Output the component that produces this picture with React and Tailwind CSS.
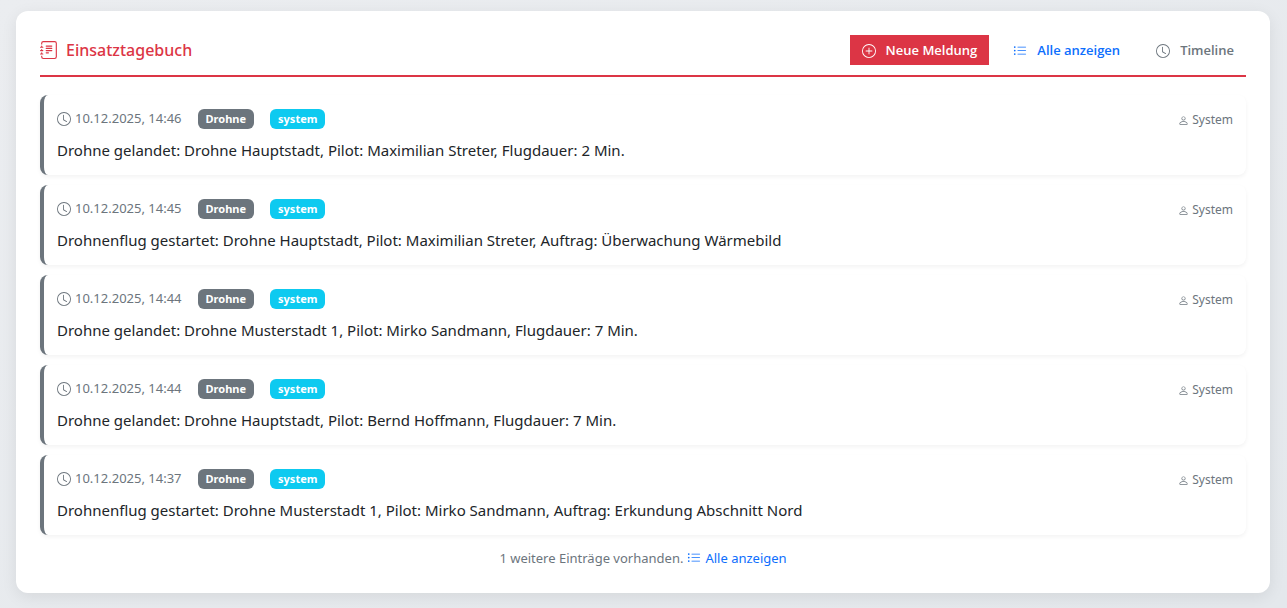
import { BsClock, BsJournalText, BsListUl, BsPerson, BsPlusCircle } from "react-icons/bs";

const entries = [
  { time: "10.12.2025, 14:46", text: "Drohne gelandet: Drohne Hauptstadt, Pilot: Maximilian Streter, Flugdauer: 2 Min." },
  { time: "10.12.2025, 14:45", text: "Drohnenflug gestartet: Drohne Hauptstadt, Pilot: Maximilian Streter, Auftrag: Überwachung Wärmebild" },
  { time: "10.12.2025, 14:44", text: "Drohne gelandet: Drohne Musterstadt 1, Pilot: Mirko Sandmann, Flugdauer: 7 Min." },
  { time: "10.12.2025, 14:44", text: "Drohne gelandet: Drohne Hauptstadt, Pilot: Bernd Hoffmann, Flugdauer: 7 Min." },
  { time: "10.12.2025, 14:37", text: "Drohnenflug gestartet: Drohne Musterstadt 1, Pilot: Mirko Sandmann, Auftrag: Erkundung Abschnitt Nord" },
];

function Entry({ time, text }) {
  return (
    <li className="rounded-lg border-l-4 border-[#6c757d] bg-white px-[13px] pt-[14px] pb-[13px] shadow-[0_2px_4px_rgba(0,0,0,0.05)]">
      <div className="flex h-5 items-center">
        <time className="flex items-center gap-1 text-[13px] text-[#6c757d]">
          <BsClock className="size-[14px]" />
          {time}
        </time>
        <span className="ml-4 flex h-5 items-center rounded-md bg-[#6c757d] px-2 text-[11px] font-bold text-white">Drohne</span>
        <span className="ml-4 flex h-5 items-center rounded-md bg-[#0dcaf0] px-2 text-[11px] font-bold text-white">system</span>
        <span className="ml-auto flex items-center gap-[3px] pt-0.5 text-xs text-[#6c757d]">
          <BsPerson className="size-[11px]" />
          System
        </span>
      </div>
      <p className="mt-[9px] text-[15px] leading-6 text-[#212529]">{text}</p>
    </li>
  );
}

export default function App() {
  return (
    <div className="min-h-screen bg-linear-to-br from-[#ebedf0] to-[#e4e8ec] py-[11px] pr-[17px] pl-4 font-['Noto_Sans','Open_Sans',sans-serif]">
      <main className="rounded-xl bg-white px-6 pt-6 pb-6 shadow-[0_4px_16px_rgba(0,0,0,0.08)]">
        <header className="flex items-center justify-between border-b-2 border-[#dc3545] pb-[10px]">
          <h1 className="flex items-center gap-2 text-base font-medium text-[#dc3545]">
            <BsJournalText className="size-[18px]" />
            Einsatztagebuch
          </h1>
          <nav className="flex h-[30px] items-center gap-3 font-['Open_Sans','Noto_Sans',sans-serif] text-[13px] font-semibold">
            <button type="button" className="flex h-[30px] items-center gap-[10px] bg-[#dc3545] px-3 pt-0.5 text-white">
              <BsPlusCircle className="size-[14px]" />
              Neue Meldung
            </button>
            <a href="#alle" className="flex h-[30px] items-center gap-[10px] px-3 pt-0.5 text-[#0d6efd]">
              <BsListUl className="size-[14px]" />
              Alle anzeigen
            </a>
            <a href="#timeline" className="flex h-[30px] items-center gap-[10px] px-3 pt-0.5 text-[#6c757d]">
              <BsClock className="size-[14px]" />
              Timeline
            </a>
          </nav>
        </header>
        <ul className="mt-[18px] flex flex-col gap-[10px]">
          {entries.map((entry, index) => (
            <Entry key={index} {...entry} />
          ))}
        </ul>
        <p className="mt-3 flex items-center justify-center gap-1 text-[13px] leading-[22px] text-[#6c757d]">
          1 weitere Einträge vorhanden.
          <a href="#alle" className="flex items-center gap-1 text-[#0d6efd]">
            <BsListUl className="size-[14px]" />
            Alle anzeigen
          </a>
        </p>
      </main>
    </div>
  );
}
